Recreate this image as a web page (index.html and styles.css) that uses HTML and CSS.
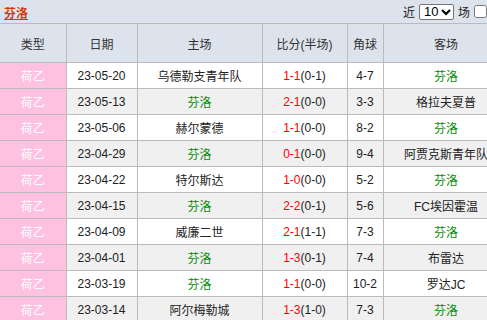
FILE: index.html
```html
<!DOCTYPE html>
<html lang="zh">
<head>
<meta charset="utf-8">
<link rel="stylesheet" href="styles.css">
</head>
<body>
<div class="bar">
  <a class="title" href="#">芬洛</a>
  <div class="ctrl">
    <span>近</span>
    <span class="sel">10<svg width="10" height="8" viewBox="0 0 10 8"><path d="M1 2 L5 6 L9 2" fill="none" stroke="#000" stroke-width="2.2"/></svg></span>
    <span>场</span>
    <input type="checkbox" class="chk">
  </div>
</div>
<table class="tbl">
  <colgroup>
    <col class="c1"><col class="c2"><col class="c3"><col class="c4"><col class="c5"><col class="c6">
  </colgroup>
  <thead>
    <tr><th>类型</th><th>日期</th><th>主场</th><th>比分(半场)</th><th>角球</th><th>客场</th></tr>
  </thead>
  <tbody>
    <tr><td class="lg">荷乙</td><td>23-05-20</td><td>乌德勒支青年队</td><td><span class="r">1-1</span>(0-1)</td><td>4-7</td><td class="g">芬洛</td></tr>
    <tr class="alt"><td class="lg">荷乙</td><td>23-05-13</td><td class="g">芬洛</td><td><span class="r">2-1</span>(0-0)</td><td>3-3</td><td>格拉夫夏普</td></tr>
    <tr><td class="lg">荷乙</td><td>23-05-06</td><td>赫尔蒙德</td><td><span class="r">1-1</span>(0-0)</td><td>8-2</td><td class="g">芬洛</td></tr>
    <tr class="alt"><td class="lg">荷乙</td><td>23-04-29</td><td class="g">芬洛</td><td><span class="r">0-1</span>(0-0)</td><td>9-4</td><td>阿贾克斯青年队</td></tr>
    <tr><td class="lg">荷乙</td><td>23-04-22</td><td>特尔斯达</td><td><span class="r">1-0</span>(0-0)</td><td>5-2</td><td class="g">芬洛</td></tr>
    <tr class="alt"><td class="lg">荷乙</td><td>23-04-15</td><td class="g">芬洛</td><td><span class="r">2-2</span>(0-1)</td><td>5-6</td><td>FC埃因霍温</td></tr>
    <tr><td class="lg">荷乙</td><td>23-04-09</td><td>威廉二世</td><td><span class="r">2-1</span>(1-1)</td><td>7-3</td><td class="g">芬洛</td></tr>
    <tr class="alt"><td class="lg">荷乙</td><td>23-04-01</td><td class="g">芬洛</td><td><span class="r">1-3</span>(0-1)</td><td>7-4</td><td>布雷达</td></tr>
    <tr><td class="lg">荷乙</td><td>23-03-19</td><td class="g">芬洛</td><td><span class="r">1-1</span>(0-0)</td><td>10-2</td><td>罗达JC</td></tr>
    <tr class="alt"><td class="lg">荷乙</td><td>23-03-14</td><td>阿尔梅勒城</td><td><span class="r">1-3</span>(1-0)</td><td>7-3</td><td class="g">芬洛</td></tr>
  </tbody>
</table>
</body>
</html>
```
FILE: styles.css
```css
html, body {
  margin: 0;
  padding: 0;
  overflow: hidden;
  background: #fff;
}
body {
  font-family: "Liberation Sans", "Noto Sans CJK SC", sans-serif;
  font-size: 12px;
  color: #222;
  width: 509px;
}
.bar {
  height: 23px;
  background: #dde3ec;
  border-bottom: 1px solid #bbb;
  display: flex;
  align-items: center;
  justify-content: space-between;
  width: 487px;
}
.title {
  margin-left: 4px;
  color: #d23a0a;
  font-weight: bold;
  font-size: 12px;
  text-decoration: underline;
  padding-top: 1px;
}
.ctrl {
  display: flex;
  align-items: center;
  gap: 4px;
  color: #222;
}
.sel {
  display: inline-flex;
  align-items: center;
  justify-content: space-between;
  box-sizing: border-box;
  width: 35px;
  height: 16px;
  border: 1px solid #767676;
  border-radius: 2px;
  background: #fff;
  padding: 0 2px 0 4px;
  font-size: 13px;
  color: #000;
}
.chk {
  margin: 0 0 0 0;
  width: 13px;
  height: 13px;
}
.tbl {
  border-collapse: collapse;
  table-layout: fixed;
  width: 509px;
}
.c1 { width: 66px; }
.c2 { width: 71px; }
.c3 { width: 125px; }
.c4 { width: 85px; }
.c5 { width: 36px; }
.c6 { width: 126px; }
.tbl th, .tbl td {
  border: 1px solid #bbb;
  text-align: center;
  padding: 0;
  white-space: nowrap;
  overflow: hidden;
}
.tbl th:first-child, .tbl td:first-child { border-left: none; }
.tbl thead tr:first-child th { border-top: none; }
.tbl th {
  height: 38px;
  background: #dde3ec;
  font-weight: normal;
  color: #333;
}
.tbl td {
  height: 25px;
  color: #222;
}
.tbl tr.alt td { background: #f0f0f0; }
.tbl td.lg, .tbl tr.alt td.lg {
  background: #ffc1e1;
  color: #fff;
}
.r { color: #ff0000; }
.tbl td.g { color: #0a8a0a; }
```
